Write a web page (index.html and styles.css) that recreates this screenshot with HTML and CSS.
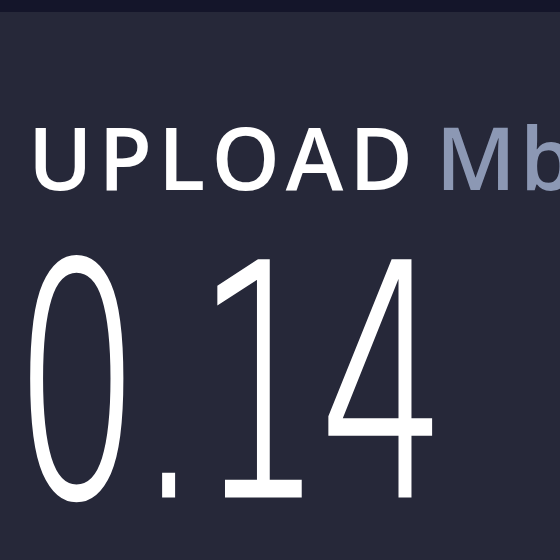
FILE: index.html
```html
<!DOCTYPE html>
<html>
<head>
<meta charset="utf-8">
<link rel="stylesheet" href="styles.css">
</head>
<body>
<div class="topbar"></div>
<main class="panel">
  <div class="label"><span class="label-name">UPLOAD</span> <span class="label-unit">Mbps</span></div>
  <div class="value"><span class="value-text">0.14</span></div>
</main>
</body>
</html>
```
FILE: styles.css
```css
html, body {
  margin: 0;
  padding: 0;
  background: #262839;
  width: 560px;
  height: 560px;
  overflow: hidden;
}
.topbar {
  height: 12px;
  background: #14152a;
}
.panel {
  padding: 94px 0 0 28px;
  white-space: nowrap;
}
.label {
  font-family: "Open Sans", sans-serif;
  font-weight: 600;
  font-size: 87px;
  line-height: 100px;
  letter-spacing: 6px;
  word-spacing: -12px;
  color: #ffffff;
  height: 100px;
}
.label-unit {
  color: #8c98b4;
  letter-spacing: 4px;
}
.value {
  height: 340px;
  margin-left: -14px;
  padding-top: 18px;
}
.value-text {
  display: inline-block;
  font-family: "DejaVu Sans", sans-serif;
  font-weight: 200;
  font-size: 320px;
  line-height: 320px;
  letter-spacing: -5px;
  color: #ffffff;
  -webkit-text-stroke: 5px #ffffff;
  transform: scaleX(0.62);
  transform-origin: left top;
}
```
